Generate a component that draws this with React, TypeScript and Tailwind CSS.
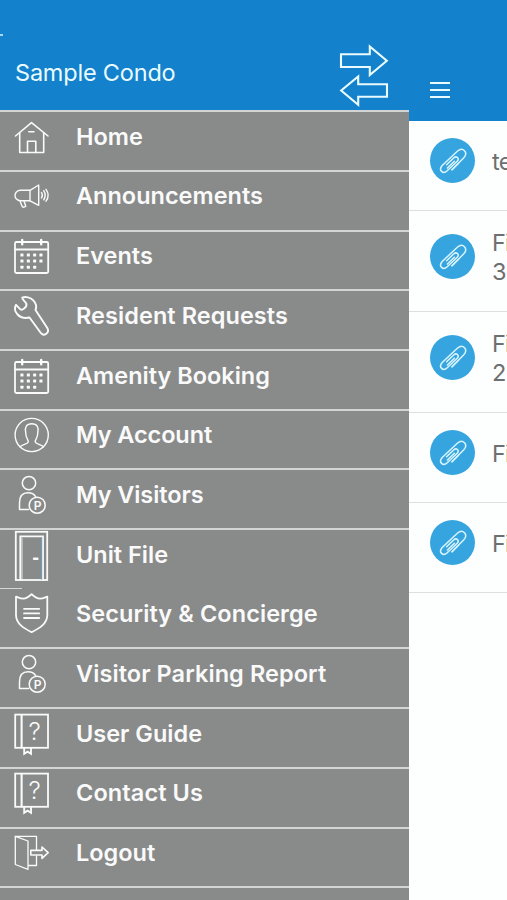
import type { ReactNode } from "react";

interface MenuItem {
  label: string;
  icon: ReactNode;
  // full divider above the row, or only a stub at the left edge
  divider?: "full" | "stub";
  labelClass: string;
}

interface FileRow {
  lines: string[];
  height: string;
}

function MenuIcon({ children }: { children: ReactNode }) {
  return (
    <svg
      className="h-[60px] w-[52px] shrink-0"
      viewBox="0 0 52 60"
      fill="none"
      stroke="#fafafa"
      strokeWidth="1.6"
      strokeLinejoin="round"
      strokeLinecap="round"
    >
      {children}
    </svg>
  );
}

function HomeIcon() {
  return (
    <MenuIcon>
      <path d="M15.5 25L31.5 11.7L48 25" />
      <path d="M19.7 22V41.5H43.7V22" />
      <path d="M27.5 41.5V30.3H35.8V41.5M28.8 20.7H34" />
    </MenuIcon>
  );
}

function MegaphoneIcon() {
  return (
    <MenuIcon>
      <g strokeWidth="1.4">
        <path d="M30 20.3H20.5C17 20.3 15 23 15 25.5C15 28 17 30.8 20.5 30.8H30Z" />
        <path d="M30 20.3L38.7 15V35.3L30 30.8" />
        <path d="M20 31L22.3 36.7Q24 37.8 25.8 36.3L24 31" />
        <path d="M41.5 22.5Q43.2 25.2 41.5 28M43.7 20.7Q46.7 25.2 43.7 29.8M46 19.3Q50.3 25.2 46 31.2" />
      </g>
    </MenuIcon>
  );
}

function CalendarIcon() {
  const dots = [
    [22, 25], [28.4, 25], [34.7, 25], [41, 25],
    [22, 31], [28.4, 31], [34.7, 31], [41, 31],
    [22, 37.2], [28.4, 37.2], [34.7, 37.2],
  ];
  return (
    <MenuIcon>
      <rect x="15" y="12" width="33.2" height="31" rx="1.5" strokeWidth="1.8" />
      <path d="M15 19.5H48" strokeWidth="1.8" />
      <path d="M22.2 10V14.3M41.2 10V14.3" strokeWidth="2.4" />
      {dots.map(([x, y]) => (
        <rect key={`${x}-${y}`} x={x - 1.6} y={y - 1.5} width="3.1" height="3" rx="0.6" fill="#fafafa" stroke="none" />
      ))}
    </MenuIcon>
  );
}

function WrenchIcon() {
  return (
    <MenuIcon>
      <path
        strokeWidth="1.9"
        d="M22.2 7.6C25.5 6.2 30.5 7.3 33.3 10.3C36 13.2 36.8 17 35.5 20L47.3 38C50 42.5 44 46.8 41 43.2L29.5 27.5C25 28.5 20.5 27.8 17.6 24.5C14.8 21.5 14.3 17.8 16 14.8L20.2 19.2C22 21 27.5 17 26.3 13.5C25.8 12 22 9.5 22.2 7.6Z"
      />
    </MenuIcon>
  );
}

function AccountIcon() {
  return (
    <MenuIcon>
      <g strokeWidth="1.4">
        <circle cx="31.7" cy="26" r="16.6" />
        <path d="M20.2 38C20.5 35.5 28.3 35.5 28.3 32.5C28.3 30 25.7 29.5 25.7 23.5C24.5 18 26.5 14.8 31.8 14.8C37 14.8 39 18 37.8 23.5C37.8 29.5 35.2 30 35.2 32.5C35.2 35.5 43 35.5 43.2 38" />
      </g>
    </MenuIcon>
  );
}

function VisitorIcon() {
  return (
    <MenuIcon>
      <g strokeWidth="1.5">
        <circle cx="29" cy="14.1" r="6.7" />
        <path d="M28.5 40.5H19.5V34C19.5 27.5 22.5 23.8 28 23.8C31.5 23.8 34 25 35.6 27.6" />
        <circle cx="37.2" cy="36.2" r="8" />
      </g>
      <text x="37.6" y="40.5" textAnchor="middle" fill="#fafafa" stroke="none" className="font-['Inter'] text-[12px] font-semibold">
        P
      </text>
    </MenuIcon>
  );
}

function DoorIcon() {
  return (
    <MenuIcon>
      <g strokeLinejoin="miter">
        <rect x="15.8" y="2.8" width="31.4" height="48.2" strokeWidth="1.8" />
        <path d="M20.3 51V7.3H43V51" strokeWidth="1.8" />
        <path d="M22 51V9.3" strokeWidth="0.8" />
        <path d="M41.5 9.3V50" stroke="#6f9cb8" strokeWidth="1.2" />
        <path d="M34 29.7H37.4" strokeWidth="2.4" />
      </g>
    </MenuIcon>
  );
}

function ShieldIcon() {
  return (
    <MenuIcon>
      <path
        strokeWidth="1.8"
        d="M31.6 6.2C29 8.8 26.5 10.6 23.2 10.7C20 10.7 18.5 9.5 16 8.6V27C16 36 24.5 40.5 31.6 44.2C38.8 40.5 47.3 36 47.3 27V8.6C44.8 9.5 43.3 10.7 40 10.7C36.8 10.6 34.2 8.8 31.6 6.2Z"
      />
      <path d="M24 20.8H39.2M24 25.4H39.2M24 30H39.2" strokeWidth="1.8" />
    </MenuIcon>
  );
}

function BookIcon() {
  return (
    <MenuIcon>
      <g strokeLinejoin="miter">
        <rect x="15.2" y="6.6" width="32.8" height="33.2" strokeWidth="1.8" />
        <path d="M21.6 7V39.5" strokeWidth="2.1" />
        <path d="M24.2 40V45.8L27.6 43.6L31 45.8V40" strokeWidth="1.9" />
      </g>
      <text x="34.7" y="32" textAnchor="middle" fill="#fafafa" stroke="none" className="font-['Inter'] text-[24.5px] font-light">
        ?
      </text>
    </MenuIcon>
  );
}

function LogoutIcon() {
  return (
    <MenuIcon>
      <g strokeWidth="1.3">
        <path d="M15.3 9.3L28 14V42.3L15.3 37.5Z" />
        <path d="M15.3 9.3H36.5V22.5M36.5 29V38.5H28.5" />
        <path d="M30.8 23.4H42V20L48.2 25.7L42 31.4V28H30.8Z" strokeWidth="1.6" />
      </g>
    </MenuIcon>
  );
}

function SwapIcon() {
  return (
    <svg className="mr-[19px] mt-[41.5px] h-[66px] w-[52px]" viewBox="0 0 52 66" fill="none" stroke="#e9fbff" strokeWidth="2.1">
      <path d="M3 12.3H31.8V4.5L48.8 18.7L31.8 33V25H3Z" />
      <path d="M49 42.2H20.2V34.5L3.2 48.5L20.2 62.7V54.8H49Z" />
    </svg>
  );
}

function PaperclipIcon() {
  return (
    <svg className="size-[45px]" viewBox="0 0 45 45" fill="none" stroke="#d9f4ff" strokeWidth="1.5" strokeLinecap="round">
      <path d="M22 31.8L33.8 19.8C38.5 14.5 33 8.5 27.6 13L12.2 27.5C8 32.3 13 36.6 17.2 32.8L27.2 23.2C29.8 20.2 26.5 17.4 23.6 20L16.6 26.8" />
      <path d="M17.4 30L24.4 23.2M22 31.8L28.5 25.2" />
    </svg>
  );
}

const menuItems: MenuItem[] = [
  { label: "Home", icon: <HomeIcon />, labelClass: "" },
  { label: "Announcements", icon: <MegaphoneIcon />, labelClass: "" },
  { label: "Events", icon: <CalendarIcon />, labelClass: "" },
  { label: "Resident Requests", icon: <WrenchIcon />, labelClass: "tracking-[0.06px]" },
  { label: "Amenity Booking", icon: <CalendarIcon />, labelClass: "" },
  { label: "My Account", icon: <AccountIcon />, labelClass: "tracking-[-0.1px]" },
  { label: "My Visitors", icon: <VisitorIcon />, labelClass: "tracking-[-0.1px]" },
  { label: "Unit File", icon: <DoorIcon />, labelClass: "" },
  { label: "Security & Concierge", icon: <ShieldIcon />, divider: "stub", labelClass: "tracking-[0.08px]" },
  { label: "Visitor Parking Report", icon: <VisitorIcon />, labelClass: "tracking-[0.08px]" },
  { label: "User Guide", icon: <BookIcon />, labelClass: "" },
  { label: "Contact Us", icon: <BookIcon />, labelClass: "tracking-[0.1px]" },
  { label: "Logout", icon: <LogoutIcon />, labelClass: "" },
];

const files: FileRow[] = [
  { lines: ["te"], height: "h-[90px]" },
  { lines: ["Fi", "3"], height: "h-[101px]" },
  { lines: ["Fi", "2"], height: "h-[101px]" },
  { lines: ["Fi"], height: "h-[90px]" },
  { lines: ["Fi"], height: "h-[90px]" },
];

function MenuRow({ item }: { item: MenuItem }) {
  return (
    <li className="flex h-[59.7px] shrink-0 flex-col">
      <div className={item.divider === "stub" ? "h-px w-[22px] shrink-0 bg-[#d4d6d5]" : "h-[2px] shrink-0 bg-[#d3d5d4]"} />
      <div className={`flex min-h-0 flex-1 items-start ${item.divider === "stub" ? "-mt-px" : "-mt-[1.5px]"}`}>
        {item.icon}
        <span className={`ml-6 mt-[10px] whitespace-nowrap text-[23.5px] font-semibold leading-8 text-[#fafafa] ${item.labelClass}`}>
          {item.label}
        </span>
      </div>
    </li>
  );
}

function Sidebar() {
  return (
    <aside className="flex w-[409px] shrink-0 flex-col overflow-hidden bg-[#898b8a]">
      <header className="flex h-[110.3px] shrink-0 items-start justify-between bg-[#1381cb]">
        <div>
          <div className="mt-[34px] h-[2px] w-[3px] bg-[#a5d8f3]" />
          <h1 className="ml-[15px] mt-[21px] whitespace-nowrap text-[23.5px] leading-8 tracking-[-0.2px] text-[#e9fbff]">
            Sample Condo
          </h1>
        </div>
        <SwapIcon />
      </header>
      <ul className="flex flex-col">
        {menuItems.map((item) => (
          <MenuRow key={item.label} item={item} />
        ))}
      </ul>
      <div className="h-[2px] shrink-0 bg-[#d3d5d4]" />
    </aside>
  );
}

function FilesPanel() {
  return (
    <main className="flex min-w-0 flex-1 flex-col overflow-hidden bg-[#fdfefe]">
      <header className="h-[120.5px] shrink-0 bg-[#1381cb] pl-[21px] pt-[82px]">
        <div className="flex w-5 flex-col gap-[5px]">
          <span className="h-[2px] bg-[#e9fbff]" />
          <span className="h-[2px] bg-[#e9fbff]" />
          <span className="h-[2px] bg-[#e9fbff]" />
        </div>
      </header>
      {files.map((file, i) => (
        <div key={i} className={`flex shrink-0 items-center gap-[17px] border-b border-[#dcdfe0] pb-[9px] pl-[21px] ${file.height}`}>
          <div className="size-[45px] shrink-0 rounded-full bg-[#36a5df]">
            <PaperclipIcon />
          </div>
          <div className="whitespace-nowrap pt-[3px] text-[23.5px] leading-[28.5px] tracking-[-0.8px] text-[#6d6f70]">
            {file.lines.map((line) => (
              <p key={line}>{line}</p>
            ))}
          </div>
        </div>
      ))}
    </main>
  );
}

export default function App() {
  return (
    <div className="flex h-[900px] w-[507px] overflow-hidden font-['Inter',sans-serif]">
      <Sidebar />
      <FilesPanel />
    </div>
  );
}
